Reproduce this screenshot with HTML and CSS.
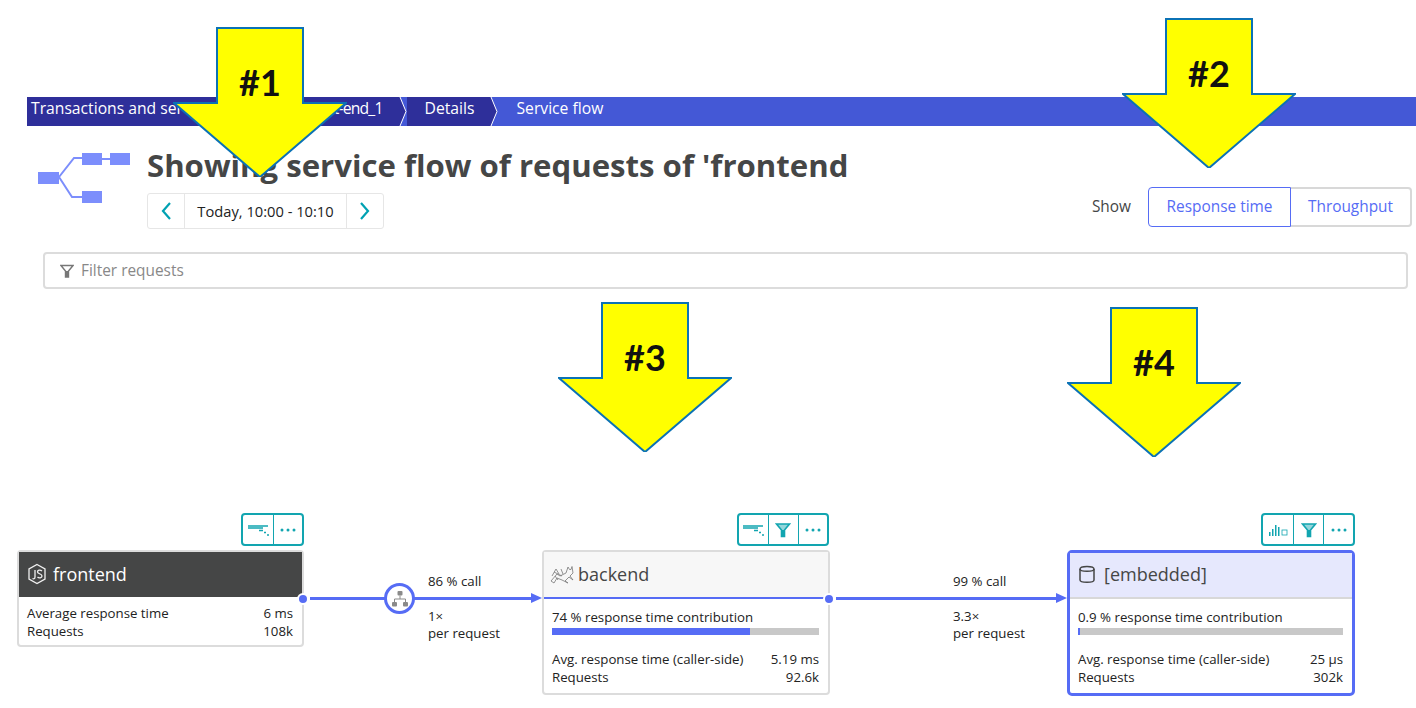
FILE: index.html
```html
<!DOCTYPE html>
<html lang="en">
<head>
    <meta charset="UTF-8">
    <meta name="viewport" content="width=device-width, initial-scale=1.0">
    <title>Service flow</title>
    <link rel="stylesheet" href="styles.css">
</head>
<body>

<div class="page">
    <nav class="crumbs">
        <a class="crumb crumb-first">Transactions and services</a>
        <svg class="crumb-sep" viewBox="0 0 8 29"><path d="M0 0H1L7 14.500L1 29H0Z" fill="#2e2f9a"/><path d="M1 0L7 14.500L1 29" fill="none" stroke="#fff" stroke-width="1"/></svg>
        <a class="crumb crumb-service">front-end_1</a>
        <svg class="crumb-sep" viewBox="0 0 8 29"><path d="M0 0H1L7 14.500L1 29H0Z" fill="#2e2f9a"/><path d="M1 0L7 14.500L1 29" fill="none" stroke="#fff" stroke-width="1"/></svg>
        <a class="crumb">Details</a>
        <svg class="crumb-sep" viewBox="0 0 8 29"><path d="M0 0H1L7 14.500L1 29H0Z" fill="#2e2f9a"/><path d="M1 0L7 14.500L1 29" fill="none" stroke="#fff" stroke-width="1"/></svg>
        <a class="crumb crumb-current">Service flow</a>
    </nav>

    <header class="page-head">
        <svg class="flow-logo" viewBox="0 0 92 50">
            <path d="M21 24L36 5H45M21 24L34 44H45M64 6H73" fill="none" stroke="#7c8efc" stroke-width="2"/>
            <rect x="0" y="19" width="21" height="12" fill="#7c8efc"/>
            <rect x="44" y="0" width="20" height="12" fill="#7c8efc"/>
            <rect x="72" y="0" width="20" height="12" fill="#7c8efc"/>
            <rect x="44" y="38" width="20" height="12" fill="#7c8efc"/>
        </svg>
        <div class="head-main">
            <h1>Showing service flow of requests of 'frontend</h1>
            <div class="timeframe">
                <button class="time-arrow"><svg viewBox="0 0 12 20" width="12" height="20"><path d="M10 2L3 10L10 18" fill="none" stroke="#00a1b2" stroke-width="2.200"/></svg></button>
                <span class="time-label">Today, 10:00 - 10:10</span>
                <button class="time-arrow"><svg viewBox="0 0 12 20" width="12" height="20"><path d="M2 2L9 10L2 18" fill="none" stroke="#00a1b2" stroke-width="2.200"/></svg></button>
            </div>
        </div>
        <div class="show-switch">
            <span class="show-label">Show</span>
            <button class="switch-btn switch-active">Response time</button>
            <button class="switch-btn switch-right">Throughput</button>
        </div>
    </header>

    <div class="filter-bar">
        <svg class="filter-icon" viewBox="0 0 14 14" width="14" height="14"><path d="M1 1.500H13L8.500 7V13H5.500V7Z" fill="none" stroke="#777" stroke-width="1.400"/><path d="M6 7H8V13H6Z" fill="#777"/></svg>
        <span>Filter requests</span>
    </div>

    <section class="flow">
        <div class="flow-col col-frontend">
            <div class="tools">
                <button class="tool"><svg viewBox="0 0 24 14" width="24" height="14"><path d="M2 3H22M2 5H17M13 7.500H17M18 9.500H20M21 12H23" fill="none" stroke="#12a5b0" stroke-width="1.300"/></svg></button>
                <button class="tool"><svg viewBox="0 0 18 6" width="18" height="6"><circle cx="3" cy="3" r="1.500" fill="#12a5b0"/><circle cx="9" cy="3" r="1.500" fill="#12a5b0"/><circle cx="15" cy="3" r="1.500" fill="#12a5b0"/></svg></button>
            </div>
            <div class="card">
                <div class="card-head head-dark">
                    <svg class="tech-icon" viewBox="0 0 20 22" width="20" height="22"><path d="M10 1.500L18 6V16L10 20.500L2 16V6Z" fill="none" stroke="#f0f0f0" stroke-width="1.300"/><path d="M8 7V14C8 16 6.500 16 5.500 15.500" fill="none" stroke="#f0f0f0" stroke-width="1.300"/><path d="M15 8C13 6.500 10.500 7 10.500 9C10.500 11 15 10.500 15 13C15 15 12 15.500 10.500 14" fill="none" stroke="#f0f0f0" stroke-width="1.300"/></svg>
                    <span>frontend</span>
                </div>
                <div class="card-body body-short">
                    <div class="stat"><span>Average response time</span><span>6 ms</span></div>
                    <div class="stat"><span>Requests</span><span>108k</span></div>
                </div>
                <i class="out-dot"></i>
            </div>
        </div>

        <div class="connector conn-one">
            <i class="conn-line"></i>
            <i class="conn-head"></i>
            <span class="router">
                <svg viewBox="0 0 18 18" width="18" height="18"><rect x="6.500" y="1" width="5" height="4.500" rx="1" fill="#8a8a8a"/><rect x="1" y="12" width="5" height="4.500" rx="1" fill="#8a8a8a"/><rect x="12" y="12" width="5" height="4.500" rx="1" fill="#8a8a8a"/><path d="M9 5.500V9M3.500 12V9H14.500V12" fill="none" stroke="#8a8a8a" stroke-width="1"/></svg>
            </span>
            <div class="conn-text">
                <div class="conn-call">86 % call</div>
                <div>1×</div>
                <div>per request</div>
            </div>
        </div>

        <div class="flow-col col-service">
            <div class="tools tools-inset">
                <button class="tool"><svg viewBox="0 0 24 14" width="24" height="14"><path d="M2 3H22M2 5H17M13 7.500H17M18 9.500H20M21 12H23" fill="none" stroke="#12a5b0" stroke-width="1.300"/></svg></button>
                <button class="tool"><svg viewBox="0 0 16 16" width="16" height="16"><path d="M1.500 2H14.500L9.500 8V14.500H6.500V8Z" fill="#12a5b0" fill-opacity="0.450" stroke="#12a5b0" stroke-width="1.600"/><path d="M7 8H9V14H7Z" fill="#12a5b0"/></svg></button>
                <button class="tool"><svg viewBox="0 0 18 6" width="18" height="6"><circle cx="3" cy="3" r="1.500" fill="#12a5b0"/><circle cx="9" cy="3" r="1.500" fill="#12a5b0"/><circle cx="15" cy="3" r="1.500" fill="#12a5b0"/></svg></button>
            </div>
            <div class="card">
                <div class="card-head head-light">
                    <svg class="tech-icon" viewBox="0 0 24 20" width="24" height="20"><g fill="none" stroke="#777" stroke-width="0.800"><path d="M1 17L7 10L10 12L16 9L18 3L19.500 5.500L21 5.500L22 2.500L23 9L20 12L23 16L19 13L15 17L18 19L12 16L7 14L4 19Z"/><path d="M2 12L6 5L9 10M4 8L12 12M8 16L5 12M13 10L11 5"/></g></svg>
                    <span>backend</span>
                </div>
                <div class="card-body">
                    <div class="contrib">74 % response time contribution</div>
                    <div class="meter"><div class="meter-fill" style="width: 74%"></div></div>
                    <div class="stat"><span>Avg. response time (caller-side)</span><span>5.19 ms</span></div>
                    <div class="stat"><span>Requests</span><span>92.6k</span></div>
                </div>
                <i class="out-dot"></i>
            </div>
        </div>

        <div class="connector conn-two">
            <i class="conn-line"></i>
            <i class="conn-head"></i>
            <div class="conn-text">
                <div class="conn-call">99 % call</div>
                <div>3.3×</div>
                <div>per request</div>
            </div>
        </div>

        <div class="flow-col col-service">
            <div class="tools tools-wide">
                <button class="tool"><svg viewBox="0 0 20 12" width="20" height="12"><path d="M1 8V12H2.500V8ZM4 5V12H5.500V5ZM7 1V12H8.500V1ZM10 3V12H11.500V3Z" fill="#12a5b0"/><rect x="14" y="6" width="5" height="5" fill="none" stroke="#12a5b0" stroke-width="0.800"/></svg></button>
                <button class="tool"><svg viewBox="0 0 16 16" width="16" height="16"><path d="M1.500 2H14.500L9.500 8V14.500H6.500V8Z" fill="#12a5b0" fill-opacity="0.450" stroke="#12a5b0" stroke-width="1.600"/><path d="M7 8H9V14H7Z" fill="#12a5b0"/></svg></button>
                <button class="tool"><svg viewBox="0 0 18 6" width="18" height="6"><circle cx="3" cy="3" r="1.500" fill="#12a5b0"/><circle cx="9" cy="3" r="1.500" fill="#12a5b0"/><circle cx="15" cy="3" r="1.500" fill="#12a5b0"/></svg></button>
            </div>
            <div class="card card-selected">
                <div class="card-head head-selected">
                    <svg class="tech-icon" viewBox="0 0 18 20" width="18" height="20"><path d="M2 5C2 1.500 16 1.500 16 5V16C16 19 2 19 2 16Z" fill="none" stroke="#454646" stroke-width="1.500"/><path d="M2 5C2 8 16 8 16 5" fill="none" stroke="#454646" stroke-width="1.500"/></svg>
                    <span>[embedded]</span>
                </div>
                <div class="card-body">
                    <div class="contrib">0.9 % response time contribution</div>
                    <div class="meter"><div class="meter-fill" style="width: 0.9%"></div></div>
                    <div class="stat"><span>Avg. response time (caller-side)</span><span>25 µs</span></div>
                    <div class="stat"><span>Requests</span><span>302k</span></div>
                </div>
            </div>
        </div>
    </section>

    <div class="callout callout-1">
        <svg viewBox="0 0 174 150" width="174" height="150"><path d="M44 1H130V76H173L87 150L1 76H44Z" fill="#ffff00" stroke="#0b72b5" stroke-width="2"/></svg>
        <span>#1</span>
    </div>
    <div class="callout callout-2">
        <svg viewBox="0 0 174 150" width="174" height="150"><path d="M44 1H130V76H173L87 150L1 76H44Z" fill="#ffff00" stroke="#0b72b5" stroke-width="2"/></svg>
        <span>#2</span>
    </div>
    <div class="callout callout-3">
        <svg viewBox="0 0 174 150" width="174" height="150"><path d="M44 1H130V76H173L87 150L1 76H44Z" fill="#ffff00" stroke="#0b72b5" stroke-width="2"/></svg>
        <span>#3</span>
    </div>
    <div class="callout callout-4">
        <svg viewBox="0 0 174 150" width="174" height="150"><path d="M44 1H130V76H173L87 150L1 76H44Z" fill="#ffff00" stroke="#0b72b5" stroke-width="2"/></svg>
        <span>#4</span>
    </div>
</div>

</body>
</html>
```

FILE: styles.css
```css
* {
    box-sizing: border-box;
}

body {
    font-family: "Open Sans", Arial, sans-serif;
    background-color: #fff;
    color: #222;
    margin: 0;
    padding: 0;
}

.page {
    position: relative;
    width: 1416px;
    height: 708px;
    overflow: hidden;
    padding-top: 97px;
}

button {
    font-family: inherit;
    background: none;
    padding: 0;
    cursor: pointer;
}

/* breadcrumb */
.crumbs {
    display: flex;
    height: 29px;
    margin-left: 27px;
    background-color: #4458d6;
    color: #fff;
    font-size: 15.700px;
    line-height: 23px;
}

.crumb {
    background-color: #2e2f9a;
    padding: 0 16px 0 18px;
    white-space: nowrap;
}

.crumb-first {
    padding: 0 8px 0 4px;
}

.crumb-service {
    flex: none;
    width: 164px;
    text-align: right;
    padding-right: 16px;
    letter-spacing: -0.800px;
}

.crumb-current {
    background: none;
    padding-left: 18px;
}

.crumb-sep {
    width: 8px;
    height: 29px;
    flex: none;
}

/* page header */
.page-head {
    display: flex;
    align-items: flex-start;
    height: 123px;
    padding-left: 38px;
}

.flow-logo {
    width: 92px;
    height: 50px;
    margin-top: 27px;
    flex: none;
}

.head-main {
    margin-left: 17px;
    padding-top: 17px;
}

h1 {
    margin: 0;
    color: #454646;
    font-size: 31.150px;
    font-weight: 700;
    line-height: 44px;
    white-space: nowrap;
}

.timeframe {
    display: inline-flex;
    align-items: stretch;
    height: 36px;
    margin-top: 6px;
    border: 1px solid #e6e6e6;
    border-radius: 3px;
}

.time-arrow {
    display: flex;
    align-items: center;
    justify-content: center;
    width: 36px;
    border: none;
}

.time-label {
    display: flex;
    align-items: center;
    justify-content: center;
    width: 163px;
    border-left: 1px solid #e6e6e6;
    border-right: 1px solid #e6e6e6;
    font-size: 14.700px;
}

.show-switch {
    display: flex;
    align-items: center;
    margin-left: auto;
    margin-top: 61px;
    margin-right: 4px;
}

.show-label {
    color: #454646;
    font-size: 15.400px;
    margin-right: 17px;
    padding-bottom: 2px;
}

.switch-btn {
    height: 40px;
    padding-bottom: 2px;
    color: #566cf5;
    font-size: 15.400px;
    border: 2px solid #d8d8d8;
}

.switch-active {
    width: 143px;
    border: 1px solid #566cf5;
    border-radius: 4px 0 0 4px;
}

.switch-right {
    width: 121px;
    border-left: none;
    border-radius: 0 4px 4px 0;
}

/* filter */
.filter-bar {
    display: flex;
    align-items: center;
    gap: 7px;
    height: 37px;
    margin: 3px 8px 0 43px;
    padding-left: 15px;
    border: 2px solid #dcdcdc;
    border-radius: 4px;
    color: #888;
    font-size: 15.400px;
}

/* flow */
.flow {
    display: flex;
    align-items: flex-start;
    margin-top: 224px;
    padding-left: 17px;
}

.flow-col {
    display: flex;
    flex-direction: column;
    flex: none;
}

.col-frontend {
    width: 287px;
}

.col-service {
    width: 288px;
}

.tools {
    display: flex;
    align-self: flex-end;
    height: 33px;
    margin-bottom: 4px;
    border: 2px solid #12a5b0;
    border-radius: 4px;
}

.tools-inset {
    margin-right: 1px;
}

.tool {
    display: flex;
    align-items: center;
    justify-content: center;
    width: 29.500px;
    border: none;
    border-left: 1.500px solid #12a5b0;
}

.tools-wide .tool {
    width: 30px;
}

.tool:first-child {
    border-left: none;
}

.card {
    position: relative;
    background-color: #fff;
    border: 2px solid #dcdcdc;
    border-radius: 4px;
    font-size: 13.250px;
    line-height: 18px;
}

.card-selected {
    border: 3px solid #566cf5;
    border-radius: 5px;
}

.card-head {
    display: flex;
    align-items: center;
    gap: 6px;
    height: 47px;
    padding-left: 8px;
    padding-bottom: 2px;
    color: #454646;
    font-size: 18px;
}

.card-selected .card-head {
    height: 46px;
    padding-left: 8px;
}

.head-dark {
    height: 45px;
    background-color: #454646;
    color: #fff;
}

.head-light {
    gap: 4px;
    padding-left: 6px;
    background-color: #f7f7f7;
    border-bottom: 2px solid #566cf5;
}

.head-selected {
    gap: 8px;
    background-color: #e6e8fd;
    border-bottom: 2px solid #d8d8d8;
}

.card-body {
    padding: 9px 9px 7px 8px;
}

.body-short {
    padding: 7px 9px 5px 8px;
}

.contrib {
    height: 18px;
}

.meter {
    height: 7px;
    margin: 2px 0 15px;
    background-color: #c8c8c8;
}

.meter-fill {
    height: 100%;
    background-color: #566cf5;
}

.stat {
    display: flex;
    justify-content: space-between;
}

.out-dot {
    position: absolute;
    right: -7px;
    top: 41px;
    width: 12px;
    height: 12px;
    background-color: #566cf5;
    border: 2px solid #fff;
    border-radius: 50%;
}

.connector {
    position: relative;
    flex: none;
    height: 120px;
    margin-top: 37px;
    font-size: 13.250px;
    line-height: 17.500px;
}

.conn-one {
    width: 238px;
}

.conn-two {
    width: 237px;
}

.conn-line {
    position: absolute;
    left: 6px;
    right: 8px;
    top: 47px;
    height: 2.500px;
    background-color: #566cf5;
}

.conn-head {
    position: absolute;
    right: 0;
    top: 43px;
    border-left: 11px solid #566cf5;
    border-top: 5px solid transparent;
    border-bottom: 5px solid transparent;
}

.router {
    position: absolute;
    left: 80px;
    top: 33px;
    display: flex;
    align-items: center;
    justify-content: center;
    width: 31px;
    height: 31px;
    background-color: #fff;
    border: 3px solid #566cf5;
    border-radius: 50%;
}

.conn-text {
    padding-top: 23px;
}

.conn-one .conn-text {
    padding-left: 124px;
}

.conn-two .conn-text {
    padding-left: 123px;
}

.conn-call {
    margin-bottom: 17px;
}

/* annotation arrows */
.callout {
    position: absolute;
    width: 174px;
    height: 150px;
}

.callout svg {
    display: block;
}

.callout span {
    position: absolute;
    left: 0;
    right: 0;
    top: 33px;
    text-align: center;
    color: #111;
    font-family: Lato, Arial, sans-serif;
    font-size: 36px;
    font-weight: 700;
    line-height: 44px;
}

.callout-1 {
    left: 173px;
    top: 27px;
}

.callout-2 {
    left: 1122px;
    top: 18px;
}

.callout-3 {
    left: 558px;
    top: 302px;
}

.callout-4 {
    left: 1067px;
    top: 307px;
}
```
